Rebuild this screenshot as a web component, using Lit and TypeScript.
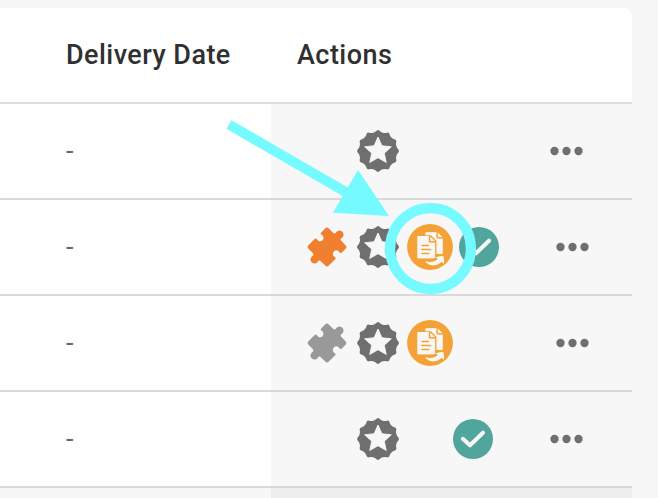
import { LitElement, html, css, svg, nothing } from "lit";
import { customElement, property } from "lit/decorators.js";

const point = (cx: number, cy: number, r: number, deg: number) => {
  const a = ((deg - 90) * Math.PI) / 180;
  return [cx + r * Math.cos(a), cy + r * Math.sin(a)].map((n) => n.toFixed(2)).join(" ");
};

/* Twelve soft lobes joined by shallow concave arcs. */
const sealPath = (() => {
  let d = "";
  for (let i = 0; i < 12; i++) {
    const a = i * 30;
    d += `${i ? "L" : "M"}${point(21, 21, 20.4, a - 4)}`;
    d += `Q${point(21, 21, 21.6, a)} ${point(21, 21, 20.4, a + 4)}`;
    d += `Q${point(21, 21, 18.9, a + 9)} ${point(21, 21, 19, a + 15)}`;
    d += `Q${point(21, 21, 18.9, a + 21)} ${point(21, 21, 20.4, a + 26)}`;
  }
  return d + "Z";
})();

const starPath = (() => {
  const pts: string[] = [];
  for (let i = 0; i < 10; i++) pts.push(point(21, 21.1, i % 2 ? 6.6 : 14, i * 36));
  return "M" + pts.join("L") + "Z";
})();

type Kind = "puzzle" | "seal" | "copy" | "check" | "more";

@customElement("action-icon")
export class ActionIcon extends LitElement {
  @property() kind: Kind = "seal";
  @property({ type: Boolean }) muted = false;

  static styles = css`
    :host { display: block; }
    svg { display: block; width: 100%; height: 100%; overflow: visible; }
    .seal, .dot { fill: #6f6f6f; }
    .star { fill: #f7f7f7; stroke: #f7f7f7; stroke-width: 0.9; stroke-linejoin: round; }
    .puzzle { fill: #f08030; }
    .puzzle.muted { fill: #999; }
    .orange { fill: #f4a238; }
    .line { fill: none; stroke: #f4a238; stroke-width: 1.5; stroke-linecap: round; stroke-linejoin: round; }
    .paper { fill: #f9f7f4; stroke: #f9f7f4; stroke-width: 1; stroke-linejoin: round; }
    .gap { fill: #f4a238; }
    .teal { fill: #50a59d; }
    .tick { fill: none; stroke: #f7f7f7; stroke-width: 4; stroke-linecap: round; stroke-linejoin: round; }
  `;

  render() {
    switch (this.kind) {
      case "puzzle":
        return html`<svg viewBox="0 0 40 40">
          <path class="puzzle ${this.muted ? "muted" : ""}" d="M18.4 1.2Q20 0 21.6 1.2L25.8 5.4C26.6 6.4 27.6 6.9 28.6 6C29.6 4.2 31.6 3 33.8 3.7C36.3 4.6 37.3 7.4 36 9.7C35.1 10.9 34 11 33.6 12Q33.4 13 34.2 13.8L38.8 18.4Q40 20 38.8 21.6L34.8 25.6C33.8 26.5 32.9 26.2 32.4 25.3C31.2 23 28.6 22.6 27 24.2C25.2 26 25.6 29 28 30.2C28.9 30.8 28.8 31.6 28 32.4L21.6 38.8Q20 40 18.4 38.8L13.8 34.2Q13 33.4 12 33.6C11 34 10.9 35.1 9.7 36C7.4 37.3 4.6 36.3 3.7 33.8C3 31.6 4.2 29.6 6 28.6C6.9 27.6 6.4 26.6 5.4 25.8L1.2 21.6Q0 20 1.2 18.4L7.4 12.2C8.2 11.3 9.3 11.3 9.9 12.3C11.1 14.6 13.9 14.9 15.5 13.3C17.1 11.7 16.7 8.8 14.5 7.6C13.5 7 13.4 6.2 14.2 5.4Z" />
        </svg>`;
      case "copy":
        return html`<svg viewBox="0 0 46 46">
          <circle class="orange" cx="23" cy="23" r="22.9" />
          <path class="paper" d="M18.8 8.7H30.6L35.2 13.3V29.4H18.8Z" />
          <path class="line" d="M30.2 8.3V13.7H35.6" />
          <path class="gap" d="M9.4 11.2H24L29.4 16.8V35.4H9.4Z" />
          <path class="paper" d="M10.8 12.5H22.8L27.6 17.3V33.9H10.8Z" />
          <path class="line" d="M22.5 12.2V17.8H28M15 21.5H21.2M15 25.5H23.6M15 29.5H21.8" />
          <path class="paper" d="M18.8 37.8C22.7 39.2 28.2 38.4 31.4 35L29.4 33.5L36 32.2L36.6 39L34.5 37.4C30 42 23 42 18.8 37.8Z" />
        </svg>`;
      case "check":
        return html`<svg viewBox="0 0 40 40">
          <circle class="teal" cx="20" cy="20" r="20" />
          <path class="tick" d="M9.8 19.8L17 26.3L30 13.7" />
        </svg>`;
      case "more":
        return html`<svg viewBox="0 0 34 10">
          <circle class="dot" cx="4.5" cy="5" r="4.15" />
          <circle class="dot" cx="16.5" cy="5" r="4.15" />
          <circle class="dot" cx="28.5" cy="5" r="4.15" />
        </svg>`;
      default:
        return html`<svg viewBox="0 0 42 42">
          <path class="seal" d=${sealPath} />
          <path class="star" d=${starPath} />
        </svg>`;
    }
  }
}

interface Row {
  puzzle?: "active" | "muted";
  copy?: boolean;
  check?: boolean;
  wide?: boolean;
}

const rows: Row[] = [
  {},
  { puzzle: "active", copy: true, check: true, wide: true },
  { puzzle: "muted", copy: true, wide: true },
  { check: true },
];

@customElement("app-root")
export class AppRoot extends LitElement {
  static styles = css`
    :host {
      display: block;
      position: relative;
      box-sizing: border-box;
      width: 658px;
      height: 498px;
      padding-top: 8px;
      overflow: hidden;
      background: #f7f7f7;
      font-family: Roboto, sans-serif;
      color: #303030;
    }
    .table { width: 632px; background: #fff; border-top-right-radius: 8px; }
    .row { display: grid; grid-template-columns: 271px 361px; height: 94px; border-bottom: 2px solid #d9d9d9; }
    .head { font-size: 27px; font-weight: 500; letter-spacing: 0.45px; border-color: #dedede; }
    .cell { display: flex; align-items: center; padding-left: 66px; }
    .head .cell { padding-bottom: 1px; }
    .head .last { padding-left: 26px; }
    .date { font-size: 27px; color: #686868; }
    .actions { display: flex; align-items: center; padding-left: 36px; background: #f7f7f7; }
    .slot { box-sizing: border-box; flex: none; display: flex; align-items: center; }
    .puzzle-slot { width: 50px; }
    .seal-slot { width: 50px; }
    .copy-slot { width: 46px; }
    .check-slot { width: 46px; }
    .wide .check-slot { width: 52px; padding-left: 6px; }
    .puzzle { width: 40px; height: 40px; }
    .seal { width: 42px; height: 42px; }
    .copy { width: 46px; height: 46px; }
    .check { width: 40px; height: 40px; }
    .more { width: 34px; height: 10px; margin-left: 51px; }
    .next { height: 10px; border: 0; background: #f7f7f7; }
    .next .actions { background: #eee; }
    .marker { position: absolute; inset: 0; width: 658px; height: 498px; }
    .ring { fill: none; stroke: #74faff; stroke-width: 10.2; }
    .shaft { stroke: #74faff; stroke-width: 10; }
    .arrowhead { fill: #74faff; }
  `;

  private renderRow(r: Row) {
    return html`<div class="row ${r.wide ? "wide" : ""}">
      <div class="cell date">-</div>
      <div class="actions">
        <div class="slot puzzle-slot">
          ${r.puzzle ? html`<action-icon class="puzzle" kind="puzzle" ?muted=${r.puzzle === "muted"}></action-icon>` : nothing}
        </div>
        <div class="slot seal-slot"><action-icon class="seal" kind="seal"></action-icon></div>
        <div class="slot copy-slot">
          ${r.copy ? html`<action-icon class="copy" kind="copy"></action-icon>` : nothing}
        </div>
        <div class="slot check-slot">
          ${r.check ? html`<action-icon class="check" kind="check"></action-icon>` : nothing}
        </div>
        <action-icon class="more" kind="more"></action-icon>
      </div>
    </div>`;
  }

  render() {
    return html`
      <div class="table">
        <div class="row head">
          <div class="cell">Delivery Date</div>
          <div class="cell last">Actions</div>
        </div>
        ${rows.map((r) => this.renderRow(r))}
        <div class="row next"><div></div><div class="actions"></div></div>
      </div>
      <svg class="marker" viewBox="0 0 658 498">
        ${svg`
          <path class="shaft" d="M229 124.5L350 194.5" />
          <path class="arrowhead" d="M358 170L389 216L333 212.7Z" />
          <circle class="ring" cx="430.5" cy="248.5" r="40.4" />
        `}
      </svg>
    `;
  }
}
